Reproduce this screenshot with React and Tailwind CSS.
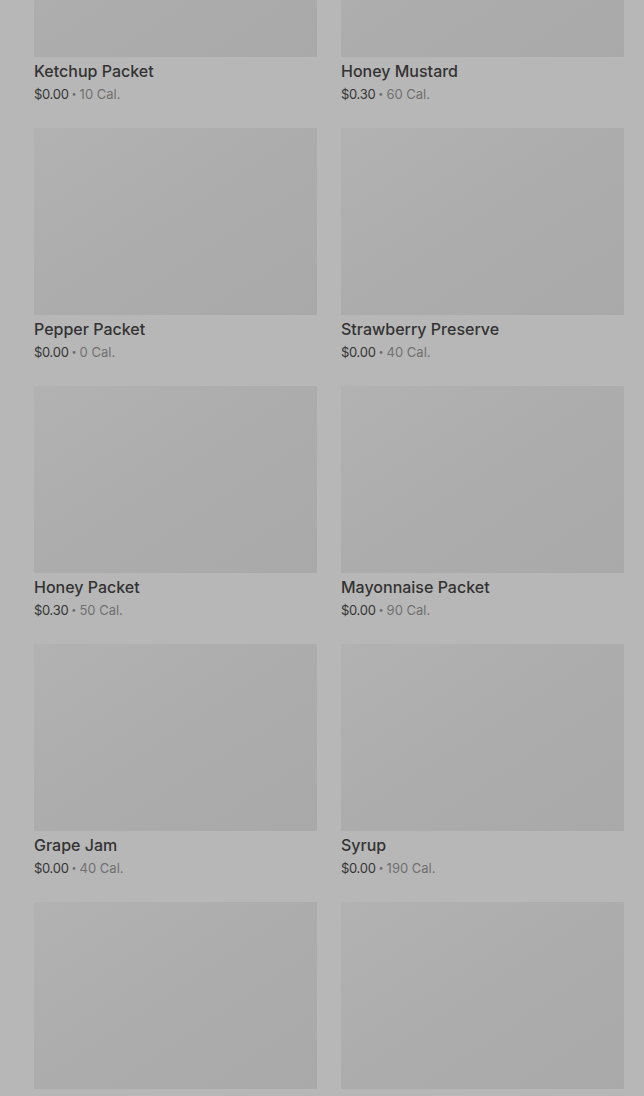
import React from "react";

const items = [
  { name: "Ketchup Packet", price: "$0.00", cal: "10 Cal." },
  { name: "Honey Mustard", price: "$0.30", cal: "60 Cal." },
  { name: "Pepper Packet", price: "$0.00", cal: "0 Cal." },
  { name: "Strawberry Preserve", price: "$0.00", cal: "40 Cal." },
  { name: "Honey Packet", price: "$0.30", cal: "50 Cal." },
  { name: "Mayonnaise Packet", price: "$0.00", cal: "90 Cal." },
  { name: "Grape Jam", price: "$0.00", cal: "40 Cal." },
  { name: "Syrup", price: "$0.00", cal: "190 Cal." },
  { name: null },
  { name: null },
];

const Card = ({ item }) => (
  <div className="flex flex-col">
    {/* image placeholder under the overlay */}
    <div className="h-[187px] w-full bg-gradient-to-br from-[#b2b2b2] via-[#acacac] to-[#a9a9a9]" />
    {item.name && (
      <>
        <p className="mt-[4px] text-[16px] leading-5 font-medium text-[#333333]">{item.name}</p>
        <p className="mt-[3px] flex items-center text-[13px] leading-5 text-[#353535]">
          <span className="tracking-[-0.3px]">{item.price}</span>
          <span className="mx-[3px] text-[9px] text-[#6f6f6f]">•</span>
          <span className="text-[#707070]">{item.cal}</span>
        </p>
      </>
    )}
  </div>
);

export default function App() {
  return (
    <div
      className="h-[1096px] overflow-hidden bg-[#b7b7b7]"
      style={{ fontFamily: "Inter, 'Open Sans', sans-serif" }}
    >
      <div className="mt-[-130px] grid grid-cols-2 gap-x-6 gap-y-6 pl-[34px] pr-[20px]">
        {items.map((item, i) => (
          <Card key={i} item={item} />
        ))}
      </div>
    </div>
  );
}
